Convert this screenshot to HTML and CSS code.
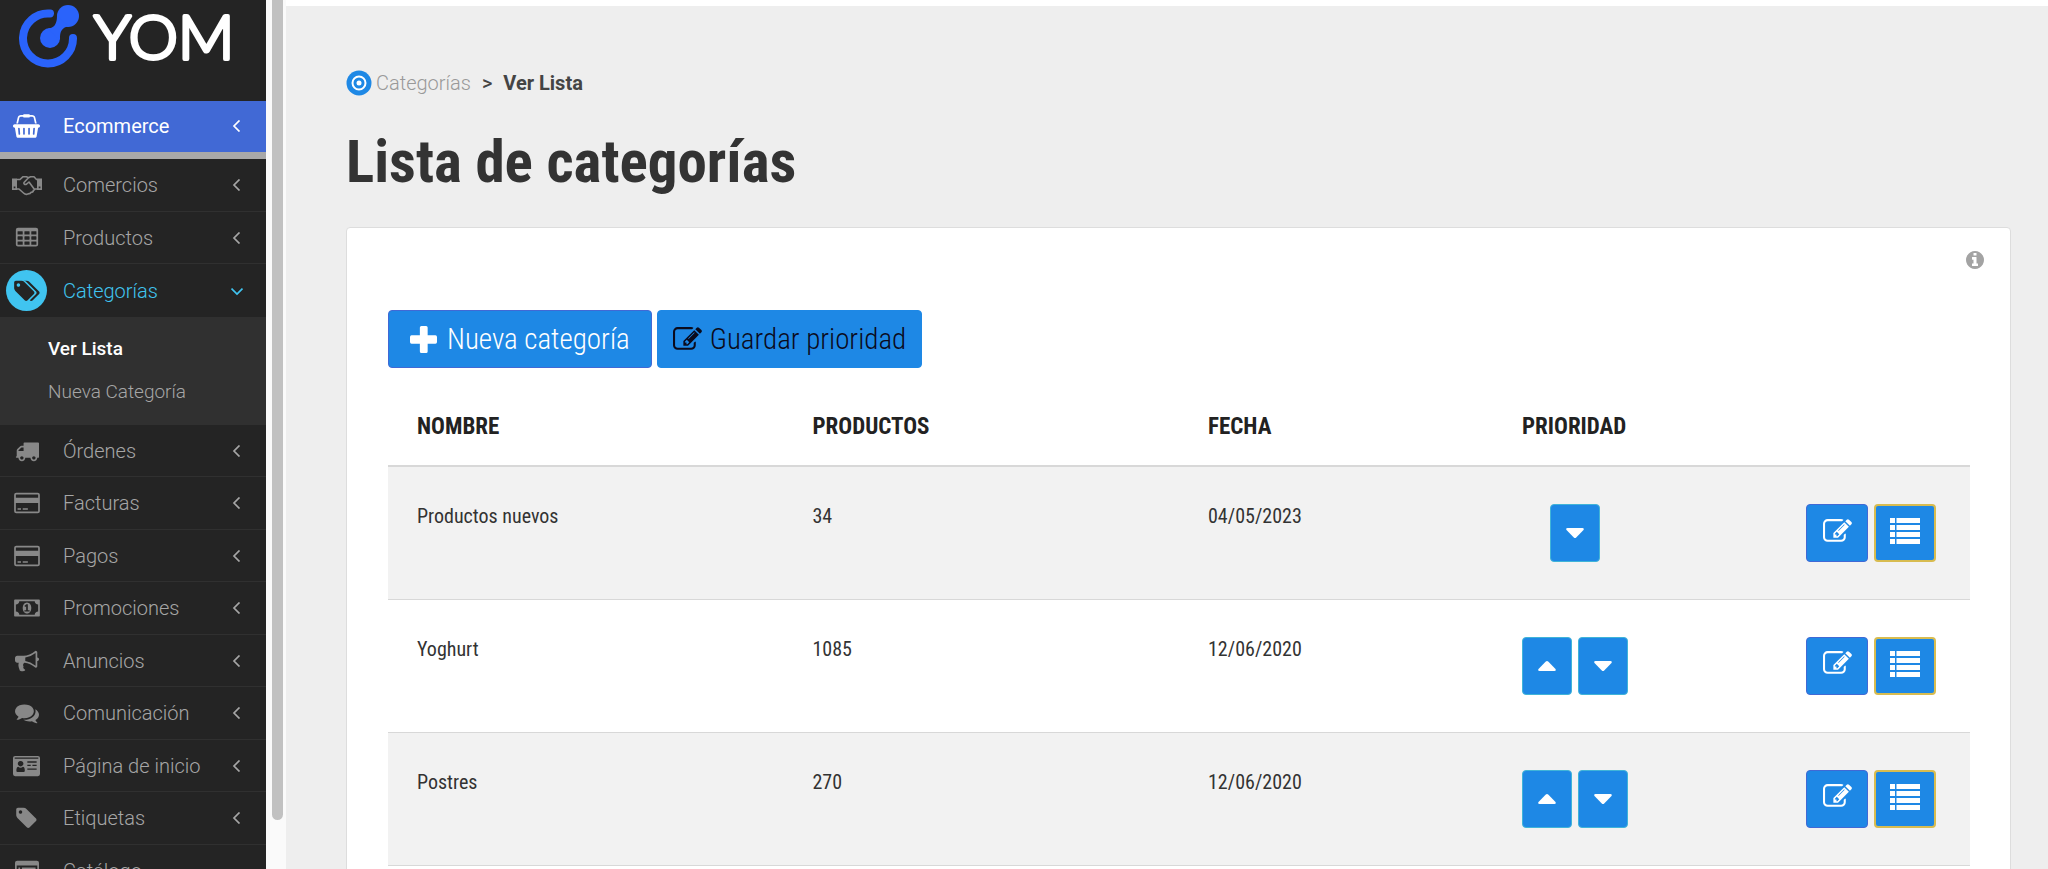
FILE: index.html
```html
<!DOCTYPE html>
<html lang="es">
<head>
<meta charset="utf-8">
<title>Lista de categorías</title>
<link rel="stylesheet" href="styles.css">
</head>
<body>
<svg class="sprite" aria-hidden="true">
  <symbol id="basket" viewBox="0 0 2048 1792"><path d="M1920 768q53 0 90.5 37.5t37.5 90.5-37.5 90.5-90.5 37.5h-15l-115 662q-8 46-44 76t-82 30h-1280q-46 0-82-30t-44-76l-115-662h-15q-53 0-90.5-37.5t-37.5-90.5 37.5-90.5 90.5-37.5h1792zm-1435 800q26-2 43.5-22.5t15.5-46.5l-32-416q-2-26-22.5-43.5t-46.5-15.5-43.5 22.5-15.5 46.5l32 416q2 25 20.5 42t43.5 17h5zm411-64v-416q0-26-19-45t-45-19-45 19-19 45v416q0 26 19 45t45 19 45-19 19-45zm384 0v-416q0-26-19-45t-45-19-45 19-19 45v416q0 26 19 45t45 19 45-19 19-45zm352 5l32-416q2-26-15.5-46.5t-43.5-22.5-46.5 15.5-22.5 43.5l-32 416q-2 26 15.5 46.5t43.5 22.5h5q25 0 43.5-17t20.5-42zm-1156-1217l-93 412h-132l101-441q19-88 89-143.5t160-55.5h167q0-26 19-45t45-19h384q26 0 45 19t19 45h167q90 0 160 55.5t89 143.5l101 441h-132l-93-412q-11-44-45.5-72t-79.5-28h-167q0 26-19 45t-45 19h-384q-26 0-45-19t-19-45h-167q-45 0-79.5 28t-45.5 72z"/></symbol>
  <symbol id="handshake" viewBox="0 0 32 24"><path fill-rule="evenodd" d="M1 5.500h5v11.500h-5zM2.700 13.500v1.700h1.700v-1.700zM26 5.500h5v11.500h-5zM27.700 13.500v1.700h1.700v-1.700z"/><path fill="none" stroke="currentColor" stroke-width="1.600" stroke-linejoin="round" stroke-linecap="round" d="M6 6.500h3l2.800-2.700h3.700l2 1 2-1h3.500l2.500 2.700M6 16h2l4.500 4c1.800 1.700 3 1.700 4.500.9 1.500 0 2.600-.5 3-1.500 1.400 0 2.300-.8 2.400-2 1-.2 1.500-.7 1.600-1.400h2M17.500 4.800l-4.500 4.700c-.6 1.500 1 2.700 2.700 1.500l2.300-2 4.800 6.500"/></symbol>
  <symbol id="table" viewBox="0 0 1792 1792"><path fill-rule="evenodd" d="M224 128h1344q160 0 160 160v1088q0 160-160 160h-1344q-160 0-160-160v-1088q0-160 160-160zM192 416v192q0 32 32 32h320q32 0 32-32v-192q0-32-32-32h-320q-32 0-32 32zM704 416v192q0 32 32 32h320q32 0 32-32v-192q0-32-32-32h-320q-32 0-32 32zM1216 416v192q0 32 32 32h320q32 0 32-32v-192q0-32-32-32h-320q-32 0-32 32zM192 800v192q0 32 32 32h320q32 0 32-32v-192q0-32-32-32h-320q-32 0-32 32zM704 800v192q0 32 32 32h320q32 0 32-32v-192q0-32-32-32h-320q-32 0-32 32zM1216 800v192q0 32 32 32h320q32 0 32-32v-192q0-32-32-32h-320q-32 0-32 32zM192 1184v192q0 32 32 32h320q32 0 32-32v-192q0-32-32-32h-320q-32 0-32 32zM704 1184v192q0 32 32 32h320q32 0 32-32v-192q0-32-32-32h-320q-32 0-32 32zM1216 1184v192q0 32 32 32h320q32 0 32-32v-192q0-32-32-32h-320q-32 0-32 32z"/></symbol>
  <symbol id="tags" viewBox="0 0 1920 1792"><path d="M448 448q0-53-37.500-90.500t-90.500-37.500-90.500 37.500-37.500 90.500 37.500 90.500 90.500 37.500 90.500-37.500 37.500-90.500zm1067 576q0 53-37 90l-491 492q-39 37-91 37-53 0-90-37l-715-716q-38-37-64.500-101t-26.500-117v-416q0-52 38-90t90-38h416q53 0 117 26.500t102 64.500l715 714q37 39 37 91zm384 0q0 53-37 90l-491 492q-39 37-91 37-36 0-59-14t-53-45l470-470q37-37 37-90 0-52-37-91l-715-714q-38-38-102-64.500t-117-26.500h224q53 0 117 26.500t102 64.500l715 714q37 39 37 91z"/></symbol>
  <symbol id="tag" viewBox="0 0 1536 1792"><path d="M448 448q0-53-37.500-90.500t-90.500-37.500-90.500 37.500-37.500 90.500 37.500 90.500 90.500 37.500 90.500-37.500 37.500-90.500zm1067 576q0 53-37 90l-491 492q-39 37-91 37-53 0-90-37l-715-716q-38-37-64.500-101t-26.500-117v-416q0-52 38-90t90-38h416q53 0 117 26.500t102 64.500l715 714q37 39 37 91z"/></symbol>
  <symbol id="truck" viewBox="0 0 1792 1792"><path d="M640 1408q0-52-38-90t-90-38-90 38-38 90 38 90 90 38 90-38 38-90zm-384-512h384v-256h-158q-13 0-22 9l-195 195q-9 9-9 22v30zm1280 512q0-52-38-90t-90-38-90 38-38 90 38 90 90 38 90-38 38-90zm256-1088v1024q0 15-4 26.500t-13.500 18.500-16.500 11.500-23.500 6-22.500 2-25.500 0-22.500-.5q0 106-75 181t-181 75-181-75-75-181h-384q0 106-75 181t-181 75-181-75-75-181h-64q-3 0-22.500.5t-25.500 0-22.500-2-23.500-6-16.500-11.500-13.500-18.500-4-26.500q0-26 19-45t45-19v-320q0-8-.5-35t0-38 2.500-34.500 6.500-37 14-30.500 22.500-30l198-198q19-19 50.500-32t58.500-13h160v-192q0-26 19-45t45-19h1024q26 0 45 19t19 45z"/></symbol>
  <symbol id="card" viewBox="0 0 1920 1792"><path fill-rule="evenodd" d="M160 128h1600q160 0 160 160v1216q0 160-160 160h-1600q-160 0-160-160v-1216q0-160 160-160zM160 256q-32 0-32 32v224h1664v-224q0-32-32-32zM128 896v608q0 32 32 32h1600q32 0 32-32v-608zM256 1280h256v128h-256zM640 1280h384v128h-384z"/></symbol>
  <symbol id="money" viewBox="0 0 1920 1792"><path d="M768 1152h384v-96h-128v-448h-114l-148 137 77 80q42-37 55-57h2v288h-128v96zm512-256q0 70-21 142t-59.500 134-101.500 101-138 39-138-39-101.500-101-59.500-134-21-142 21-142 59.500-134 101.500-101 138-39 138 39 101.500 101 59.500 134 21 142zm512 256v-512q-106 0-181-75t-75-181h-1152q0 106-75 181t-181 75v512q106 0 181 75t75 181h1152q0-106 75-181t181-75zm128-832v1152q0 26-19 45t-45 19h-1792q-26 0-45-19t-19-45v-1152q0-26 19-45t45-19h1792q26 0 45 19t19 45z"/></symbol>
  <symbol id="bullhorn" viewBox="0 0 1792 1792"><path d="M1664 640q53 0 90.500 37.500t37.500 90.500-37.500 90.500-90.500 37.500v384q0 52-38 90t-90 38q-417-347-812-380-58 19-91 66t-31 100.500 40 92.500q-20 33-23 65.500t6 58 33.500 55 48 50 61.500 50.500q-29 58-111.500 83t-168.500 11.500-132-55.500q-7-23-29.500-87.500t-32-94.500-23-89-15-101 3.500-98 22-110.500h-122q-66 0-113-47t-47-113v-192q0-66 47-113t113-47h480q435 0 896-384 52 0 90 38t38 90v384zm-128 604v-954q-394 302-768 343v270q377 42 768 341z"/></symbol>
  <symbol id="comments" viewBox="0 0 1792 1792"><path d="M1408 768q0 139-94 257t-256.500 186.500-353.500 68.500q-86 0-176-16-124 88-278 128-36 9-86 16h-3q-11 0-20.500-8t-11.500-21q-1-3-1-6.500t.5-6.500 2-6l2.500-5 3.500-5.500 4-5 4.500-5 4-4.500q5-6 23-25t26-29.500 22.500-29 25-38.500 20.500-44q-124-72-195-177t-71-224q0-139 94-257t256.500-186.500 353.500-68.500 353.500 68.500 256.500 186.500 94 257zm384 256q0 120-71 224.500t-195 176.500q10 24 20.500 44t25 38.500 22.500 29 26 29.500 23 25q1 1 4 4.500t4.500 5 4 5 3.500 5.500l2.500 5 2 6 .5 6.500-1 6.500q-3 14-13 22t-22 7q-50-7-86-16-154-40-278-128-90 16-176 16-271 0-472-132 58 4 88 4 161 0 309-45t264-129q125-92 192-212t67-254q0-77-23-152 129 71 204 178t75 230z"/></symbol>
  <symbol id="idcard" viewBox="0 0 2048 1792"><path fill-rule="evenodd" d="M160 128h1728q160 0 160 160v1216q0 160-160 160h-1728q-160 0-160-160v-1216q0-160 160-160zM128 256v96h1792v-96zM896 1260q0-300-150-300-70 64-170 64t-170-64q-150 0-150 300 0 100 90 100h460q90 0 90-100zM576 512a210 210 0 1 0 1 0zM1088 544v96h704v-96zM1088 800v96h256v-96zM1472 800v96h320v-96zM1088 1088v96h704v-96z"/></symbol>
  <symbol id="listalt" viewBox="0 0 1792 1792"><path fill-rule="evenodd" d="M160 128h1472q160 0 160 160v1216q0 160-160 160h-1472q-160 0-160-160v-1216q0-160 160-160zM128 480v1024q0 32 32 32h1472q32 0 32-32v-1024zM256 640h128v128h-128zM512 640h1024v128h-1024zM256 896h128v128h-128zM512 896h1024v128h-1024z"/></symbol>
  <symbol id="edit" viewBox="0 0 1792 1792"><path d="M888 1184l116-116-152-152-116 116v56h96v96h56zm440-720q-16-16-33 1l-350 350q-17 17-1 33t33-1l350-350q17-17 1-33zm80 594v190q0 119-84.500 203.500t-203.500 84.500h-832q-119 0-203.500-84.500t-84.500-203.500v-832q0-119 84.500-203.500t203.500-84.500h832q63 0 117 25 15 7 18 23 3 17-9 29l-49 49q-14 14-32 8-23-6-45-6h-832q-66 0-113 47t-47 113v832q0 66 47 113t113 47h832q66 0 113-47t47-113v-126q0-13 9-22l64-64q15-15 35-7t20 29zm-96-738l288 288-672 672h-288v-288zm444 132l-92 92-288-288 92-92q28-28 68-28t68 28l152 152q28 28 28 68t-28 68z"/></symbol>
  <symbol id="list" viewBox="0 0 30 26"><path d="M0 0h5v5h-5zM6.500 0h23.500v5h-23.500zM0 7h5v5h-5zM6.500 7h23.500v5h-23.500zM0 14h5v5h-5zM6.500 14h23.500v5h-23.500zM0 21h5v5h-5zM6.500 21h23.500v5h-23.500z"/></symbol>
  <symbol id="plus" viewBox="0 0 26 26"><path d="M11 0h4.500q1.500 0 1.500 1.500v7.500h7.500q1.500 0 1.500 1.500v5q0 1.500-1.500 1.500h-7.500v7.500q0 1.500-1.500 1.500h-4.500q-1.500 0-1.500-1.500v-7.500h-8q-1.500 0-1.500-1.500v-5q0-1.500 1.500-1.500h8v-7.500q0-1.500 1.500-1.500z"/></symbol>
  <symbol id="up" viewBox="0 0 18 10"><path d="M9 0q.7 0 1.200.5l7.300 7.500q.9 1.800-1 2h-15q-1.900-.2-1-2l7.300-7.500q.5-.5 1.200-.5z"/></symbol>
  <symbol id="down" viewBox="0 0 18 10"><path d="M9 10q.7 0 1.200-.5l7.300-7.500q.9-1.800-1-2h-15q-1.900.2-1 2l7.300 7.500q.5.5 1.200.5z"/></symbol>
  <symbol id="chev" viewBox="0 0 12 12"><path d="M8.500 .5l-5.500 5.500 5.500 5.500" fill="none" stroke="currentColor" stroke-width="1.700"/></symbol>
  <symbol id="chevdown" viewBox="0 0 12 12"><path d="M.5 3.500l5.500 5.500 5.500-5.500" fill="none" stroke="currentColor" stroke-width="1.700"/></symbol>
  <symbol id="info" viewBox="0 0 1536 1792"><path d="M1024 1376v-160q0-14-9-23t-23-9h-96v-512q0-14-9-23t-23-9h-320q-14 0-23 9t-9 23v160q0 14 9 23t23 9h96v320h-96q-14 0-23 9t-9 23v160q0 14 9 23t23 9h448q14 0 23-9t9-23zm-128-896v-160q0-14-9-23t-23-9h-192q-14 0-23 9t-9 23v160q0 14 9 23t23 9h192q14 0 23-9t9-23zm640 416q0 209-103 385.500t-279.500 279.500-385.500 103-385.500-103-279.500-279.500-103-385.500 103-385.500 279.500-279.500 385.500-103 385.500 103 279.500 279.500 103 385.500z"/></symbol>
</svg>
<div class="app">
  <aside class="sidebar">
    <a class="logo" href="#" aria-label="YOM">
      <svg class="logo-full" viewBox="0 0 226 76">
        <path d="M31 9.500A25 25 0 1 0 54 34" transform="translate(0 4)" fill="none" stroke="#2a63fb" stroke-width="8" stroke-linecap="round"/>
        <circle cx="49" cy="16" r="11" fill="#2a63fb"/><circle cx="31" cy="38" r="10" fill="#2a63fb"/>
        <path d="M38 16q0 12-9 12.500l12 11.500q-1-13 9-13.500z" fill="#2a63fb"/>
        <text class="logo-text" x="75" y="59">YOM</text>
      </svg>
    </a>
    <nav>
      <ul class="menu">
        <li class="item primary"><a href="#"><span class="ico"><svg class="w32"><use href="#basket"/></svg></span><span class="label">Ecommerce</span><svg class="chev"><use href="#chev"/></svg></a></li>
        <li class="item"><a href="#"><span class="ico"><svg class="whs"><use href="#handshake"/></svg></span><span class="label">Comercios</span><svg class="chev"><use href="#chev"/></svg></a></li>
        <li class="item"><a href="#"><span class="ico"><svg class="w28"><use href="#table"/></svg></span><span class="label">Productos</span><svg class="chev"><use href="#chev"/></svg></a></li>
        <li class="item open"><a href="#"><span class="ico"><svg class="w30"><use href="#tags"/></svg></span><span class="label">Categorías</span><svg class="chev"><use href="#chevdown"/></svg></a>
          <ul class="submenu">
            <li><a class="current" href="#">Ver Lista</a></li>
            <li><a href="#">Nueva Categoría</a></li>
          </ul>
        </li>
        <li class="item"><a href="#"><span class="ico"><svg class="w28"><use href="#truck"/></svg></span><span class="label">Órdenes</span><svg class="chev"><use href="#chev"/></svg></a></li>
        <li class="item"><a href="#"><span class="ico"><svg class="w30"><use href="#card"/></svg></span><span class="label">Facturas</span><svg class="chev"><use href="#chev"/></svg></a></li>
        <li class="item"><a href="#"><span class="ico"><svg class="w30"><use href="#card"/></svg></span><span class="label">Pagos</span><svg class="chev"><use href="#chev"/></svg></a></li>
        <li class="item"><a href="#"><span class="ico"><svg class="w30"><use href="#money"/></svg></span><span class="label">Promociones</span><svg class="chev"><use href="#chev"/></svg></a></li>
        <li class="item"><a href="#"><span class="ico"><svg class="w28"><use href="#bullhorn"/></svg></span><span class="label">Anuncios</span><svg class="chev"><use href="#chev"/></svg></a></li>
        <li class="item"><a href="#"><span class="ico"><svg class="w28"><use href="#comments"/></svg></span><span class="label">Comunicación</span><svg class="chev"><use href="#chev"/></svg></a></li>
        <li class="item"><a href="#"><span class="ico"><svg class="w32"><use href="#idcard"/></svg></span><span class="label">Página de inicio</span><svg class="chev"><use href="#chev"/></svg></a></li>
        <li class="item"><a href="#"><span class="ico"><svg class="w24"><use href="#tag"/></svg></span><span class="label">Etiquetas</span><svg class="chev"><use href="#chev"/></svg></a></li>
        <li class="item"><a href="#"><span class="ico"><svg class="w28"><use href="#listalt"/></svg></span><span class="label">Catálogo</span></a></li>
      </ul>
    </nav>
  </aside>
  <div class="scroll-track"><div class="scroll-thumb"></div></div>
  <main class="main">
    <nav class="crumbs" aria-label="Ruta">
      <svg class="target" viewBox="0 0 26 26"><circle cx="13" cy="13" r="12.500" fill="#1e88e5"/><circle cx="13" cy="13" r="6.500" fill="none" stroke="#fff" stroke-width="2"/><circle cx="13" cy="13" r="2.500" fill="#fff"/></svg>
      <a href="#">Categorías</a><span class="sep">&gt;</span><strong>Ver Lista</strong>
    </nav>
    <h1>Lista de categorías</h1>
    <section class="card">
      <div class="card-tools"><button class="info" type="button" aria-label="Información"><svg><use href="#info"/></svg></button></div>
      <div class="actions">
        <button class="btn blue wide" type="button"><svg class="plus"><use href="#plus"/></svg>Nueva categoría</button>
        <button class="btn save" type="button"><svg class="edit"><use href="#edit"/></svg>Guardar prioridad</button>
      </div>
      <table class="list">
        <thead><tr><th class="c-name">Nombre</th><th class="c-prod">Productos</th><th class="c-date">Fecha</th><th class="c-prio">Prioridad</th><th class="c-act"></th></tr></thead>
        <tbody>
          <tr><td>Productos nuevos</td><td>34</td><td>04/05/2023</td>
            <td><div class="group center"><button class="btn move" type="button" aria-label="Bajar"><svg><use href="#down"/></svg></button></div></td>
            <td><div class="group end"><button class="btn blue tool" type="button" aria-label="Editar"><svg class="edit"><use href="#edit"/></svg></button><button class="btn warn tool" type="button" aria-label="Ver productos"><svg class="rows"><use href="#list"/></svg></button></div></td></tr>
          <tr><td>Yoghurt</td><td>1085</td><td>12/06/2020</td>
            <td><div class="group center"><button class="btn move" type="button" aria-label="Subir"><svg><use href="#up"/></svg></button><button class="btn move" type="button" aria-label="Bajar"><svg><use href="#down"/></svg></button></div></td>
            <td><div class="group end"><button class="btn blue tool" type="button" aria-label="Editar"><svg class="edit"><use href="#edit"/></svg></button><button class="btn warn tool" type="button" aria-label="Ver productos"><svg class="rows"><use href="#list"/></svg></button></div></td></tr>
          <tr><td>Postres</td><td>270</td><td>12/06/2020</td>
            <td><div class="group center"><button class="btn move" type="button" aria-label="Subir"><svg><use href="#up"/></svg></button><button class="btn move" type="button" aria-label="Bajar"><svg><use href="#down"/></svg></button></div></td>
            <td><div class="group end"><button class="btn blue tool" type="button" aria-label="Editar"><svg class="edit"><use href="#edit"/></svg></button><button class="btn warn tool" type="button" aria-label="Ver productos"><svg class="rows"><use href="#list"/></svg></button></div></td></tr>
        </tbody>
      </table>
    </section>
  </main>
</div>
</body>
</html>
```
FILE: styles.css
```css
* { box-sizing: border-box; }
body { margin: 0; background: #eee; color: #333; font-family: Roboto, sans-serif; font-size: 20px; }
a { color: inherit; text-decoration: none; }
ul { margin: 0; padding: 0; list-style: none; }
svg { fill: currentColor; flex: none; }
.sprite { display: none; }

.app { display: flex; height: 100vh; overflow: hidden; }

/* Sidebar */
.sidebar { width: 266px; flex: none; background: #242424; color: #a6a6a6; overflow: hidden; }
.logo { display: flex; height: 101px; padding: 0 0 0 19px; }
.logo-full { width: 226px; height: 76px; }
.logo-text { fill: #fff; stroke: #fff; stroke-width: 4px; stroke-linejoin: round; font: 300 62px Lato, sans-serif; }
.item > a { display: flex; align-items: center; height: 53px; padding-right: 23px; border-bottom: 1px solid #303030; font-weight: 300; }
.item:nth-child(odd) > a { height: 52px; }
.item.primary > a { height: 58px; padding-bottom: 2px; background: #4169d5; color: #fff; font-weight: 400; border-bottom: 7px solid #a9a9a9; }
.ico { display: flex; align-items: center; justify-content: center; width: 41px; height: 41px; margin: 0 16px 0 6px; color: #888; }
.primary .ico { color: #fff; }
.ico svg { height: 24px; }
.ico .w24 { width: 21px; }
.ico .w28 { width: 24px; }
.ico .w30 { width: 26px; }
.ico .w32 { width: 27px; }
.ico .whs { width: 32px; }
.label { flex: 1; }
.chev { width: 12px; height: 12px; }
.open > a { color: #40c4f0; border-bottom: 0; }
.open .ico { border-radius: 50%; background: #40c4f0; color: #242424; }
.submenu { background: #303030; padding: 10px 0 12px 48px; font-size: 19px; font-weight: 300; }
.submenu a { display: block; line-height: 43px; }
.submenu .current { color: #fff; font-weight: 500; }

/* Sidebar scroll indicator */
.scroll-track { width: 20px; flex: none; padding: 0 3px 0 6px; background: #fafafa; }
.scroll-thumb { height: calc(100% - 49px); background: #c1c1c1; border-radius: 0 0 6px 6px; }

/* Content */
.main { flex: 1; min-width: 0; border-top: 6px solid #fff; padding: 62px 37px 0 60px; }
.crumbs { display: flex; align-items: center; height: 30px; color: #999; font-weight: 300; }
.target { width: 26px; height: 26px; margin-right: 4px; }
.sep { margin: 0 11px; color: #444; font-weight: 500; }
.crumbs strong { color: #444; font-weight: 700; }
h1 { margin: 26px 0 27px; font: 700 59px/76px "Roboto Condensed", Roboto, sans-serif; }
.card { min-height: 700px; padding: 20px 40px 40px 41px; background: #fff; border: 1px solid #ddd; border-radius: 4px; }
.card-tools { display: flex; justify-content: flex-end; padding-bottom: 38px; margin-right: -14px; }
.info { display: flex; padding: 0; border: 0; background: none; color: #a3a3a3; }
.info svg { width: 18px; height: 24px; }
.actions { display: flex; gap: 5px; }
.group { display: flex; gap: 6px; }
.center { justify-content: center; }
.end { justify-content: flex-end; padding-right: 5px; }
.btn { display: flex; flex: none; align-items: center; justify-content: center; gap: 10px; height: 58px; padding: 0 15px; border: 1px solid #1e88e5; border-radius: 4px; background: #1e88e5; color: #fff; font: 300 29px/40px "Roboto Condensed", Roboto, sans-serif; }
.btn.blue { border-color: #4169d5; }
.btn.wide { padding: 0 21px; }
.btn.save { gap: 8px; color: #0b0b1c; }
.btn.move { width: 50px; padding: 0; border-color: #40b4d8; }
.btn.tool { width: 62px; padding: 0 0 4px; }
.btn.warn { border: 2px solid #d8bc50; }
.plus { width: 27px; height: 27px; }
.edit { width: 29px; height: 29px; }
.rows { width: 30px; height: 26px; }
.move svg { width: 18px; height: 10px; }

.list { width: 100%; margin-top: 20px; border-collapse: collapse; table-layout: fixed; font-family: "Roboto Condensed", Roboto, sans-serif; text-align: left; }
.list th { height: 78px; padding: 0 29px; border-bottom: 2px solid #d8d8d8; color: #222; font-size: 23px; font-weight: 700; text-transform: uppercase; }
.list td { height: 133px; padding: 37px 29px 36px; border-bottom: 1px solid #d8d8d8; vertical-align: top; line-height: 24px; }
.list tbody tr:nth-child(odd) { background: #f2f2f2; }
.c-name, .c-prod { width: 25%; }
.c-date { width: 314px; }
.c-prio { width: 164px; }
```
